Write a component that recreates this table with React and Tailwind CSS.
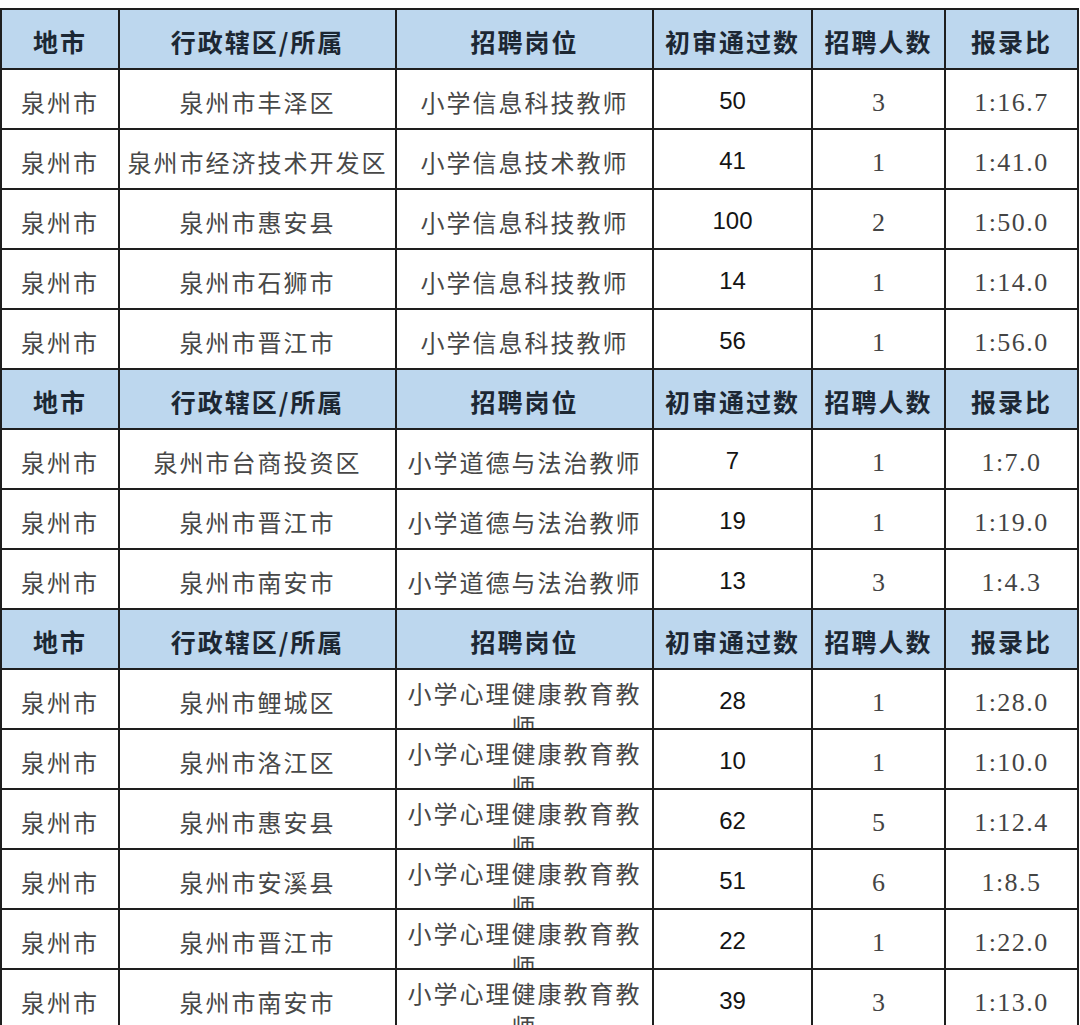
import React from "react";

const HEAD = ["地市", "行政辖区/所属", "招聘岗位", "初审通过数", "招聘人数", "报录比"];

const rows = [
  "H",
  ["泉州市", "泉州市丰泽区", "小学信息科技教师", "50", "3", "1:16.7"],
  ["泉州市", "泉州市经济技术开发区", "小学信息技术教师", "41", "1", "1:41.0"],
  ["泉州市", "泉州市惠安县", "小学信息科技教师", "100", "2", "1:50.0"],
  ["泉州市", "泉州市石狮市", "小学信息科技教师", "14", "1", "1:14.0"],
  ["泉州市", "泉州市晋江市", "小学信息科技教师", "56", "1", "1:56.0"],
  "H",
  ["泉州市", "泉州市台商投资区", "小学道德与法治教师", "7", "1", "1:7.0"],
  ["泉州市", "泉州市晋江市", "小学道德与法治教师", "19", "1", "1:19.0"],
  ["泉州市", "泉州市南安市", "小学道德与法治教师", "13", "3", "1:4.3"],
  "H",
  ["泉州市", "泉州市鲤城区", "小学心理健康教育教师", "28", "1", "1:28.0"],
  ["泉州市", "泉州市洛江区", "小学心理健康教育教师", "10", "1", "1:10.0"],
  ["泉州市", "泉州市惠安县", "小学心理健康教育教师", "62", "5", "1:12.4"],
  ["泉州市", "泉州市安溪县", "小学心理健康教育教师", "51", "6", "1:8.5"],
  ["泉州市", "泉州市晋江市", "小学心理健康教育教师", "22", "1", "1:22.0"],
  ["泉州市", "泉州市南安市", "小学心理健康教育教师", "39", "3", "1:13.0"],
];

const cjk = "font-['Noto_Sans_CJK_SC','Noto_Sans',sans-serif]";
const arial = "font-['Liberation_Sans',Arial,sans-serif]";
const serif = "font-['Liberation_Serif','Times_New_Roman',serif]";

const cellBase = "h-[60px] border-r-2 border-b-2 border-[#1e1e1e] overflow-hidden";
const centered = "flex items-center justify-center whitespace-nowrap";

function HeaderRow() {
  return HEAD.map((h, i) => (
    <div
      key={"h" + i}
      className={`${cellBase} ${centered} ${cjk} bg-[#bdd7ee] pt-[6px] text-[25px] font-bold tracking-[2px] text-[#1c2733]`}
    >
      {h}
    </div>
  ));
}

function DataRow({ r }) {
  const wrap = r[2].length > 9;
  return (
    <>
      <div className={`${cellBase} ${centered} ${cjk} pt-[6px] text-[24px] tracking-[2px] text-[#484848]`}>
        {r[0]}
      </div>
      <div className={`${cellBase} ${centered} ${cjk} pt-[6px] text-[24px] tracking-[2px] text-[#484848]`}>
        {r[1]}
      </div>
      {wrap ? (
        <div className={`${cellBase} ${cjk} pt-[6px] text-center text-[24px] leading-[33px] tracking-[2px] text-[#484848]`}>
          {r[2]}
        </div>
      ) : (
        <div className={`${cellBase} ${centered} ${cjk} pt-[6px] text-[24px] tracking-[2px] text-[#484848]`}>
          {r[2]}
        </div>
      )}
      <div className={`${cellBase} ${centered} ${arial} pt-[4px] text-[24px] text-[#141414]`}>
        {r[3]}
      </div>
      <div className={`${cellBase} ${centered} ${serif} pt-[6px] text-[26px] text-[#444]`}>
        {r[4]}
      </div>
      <div className={`${cellBase} ${centered} ${serif} pt-[6px] text-[26px] tracking-[1.5px] text-[#444]`}>
        {r[5]}
      </div>
    </>
  );
}

export default function App() {
  return (
    <div className="w-[1080px] h-[1025px] overflow-hidden bg-white">
      <div className="mt-[8px] w-[1079px] border-l-2 border-t-2 border-[#1e1e1e] grid grid-cols-[118px_277px_257px_159px_133px_133px]">
        {rows.map((r, i) =>
          r === "H" ? <HeaderRow key={i} /> : <DataRow key={i} r={r} />
        )}
      </div>
    </div>
  );
}
